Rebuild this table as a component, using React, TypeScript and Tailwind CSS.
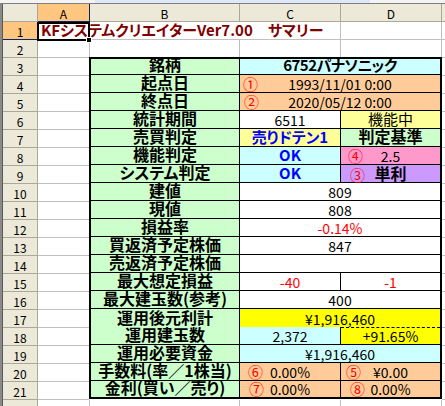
import React from "react";

const NUMS = Array.from({ length: 19 }, (_, i) => i + 3);

function ColHead({ label, active, className = "" }: { label: string; active?: boolean; className?: string }) {
  return (
    <div
      className={`h-[18px] flex items-end justify-center pb-[1px] text-[12px] leading-none border-r border-b ${
        active ? "bg-[#ffc680] border-[#0a246a]" : "bg-[#ece9d8] border-[#aca899]"
      } ${className}`}
    >
      {label}
    </div>
  );
}

function RowHead({ n, active }: { n: number; active?: boolean }) {
  return (
    <div
      className={`h-[18px] w-[35px] flex items-end justify-center pb-[1px] text-[12px] leading-none border-r border-b ${
        active ? "bg-[#ffc680] border-[#0a246a]" : "bg-[#ece9d8] border-[#aca899]"
      }`}
    >
      {n}
    </div>
  );
}

function Mark({ children, pad }: { children: string; pad: string }) {
  return <span className={`justify-self-start ${pad} text-[#ff0000] text-[15px] leading-none`}>{children}</span>;
}

// value centred across the cell, circled number pinned to the left
function MarkCell({ mark, pad, className, children }: { mark: string; pad: string; className: string; children: React.ReactNode }) {
  return (
    <div className={`grid grid-cols-[1fr_auto_1fr] items-end pb-[1px] ${className}`}>
      <Mark pad={pad}>{mark}</Mark>
      <span className="text-[14px] leading-none">{children}</span>
      <span />
    </div>
  );
}

function TRow({ label, first, last, open, children }: { label: string; first?: boolean; last?: boolean; open?: boolean; children?: React.ReactNode }) {
  const h = first || last ? "h-[16px]" : "h-[18px]";
  return (
    <div className={`flex ${h} ${last || open ? "" : "border-b border-black"}`}>
      <div className="w-[149px] shrink-0 border-r border-black bg-[#ccffcc] flex items-end justify-center pb-[2px]">
        <span className="text-[16px] font-bold leading-none [font-feature-settings:'palt']">{label}</span>
      </div>
      {children}
    </div>
  );
}

const C = "w-[101px] shrink-0 border-r border-black flex items-end justify-center pb-[1px]";
const D = "flex-1 flex items-end justify-center pb-[1px]";
const V = "text-[14px] leading-none";
const B = "text-[15px] font-bold leading-none mb-px [font-feature-settings:'palt']";

export default function App() {
  return (
    <div className="w-[445px] h-[406px] overflow-hidden bg-white flex flex-col font-['Noto_Sans_CJK_JP',sans-serif] text-black">
      <div className="h-[4px] shrink-0 flex border-b border-[#808080] bg-[#f4f4f4]">
        <div className="w-[95px]" />
        <div className="w-[275px] bg-[#dfe8f6]" />
      </div>
      <div className="flex flex-1 min-h-0">
        <div className="w-[3px] shrink-0 bg-[#8a8a8a] border-r border-[#5a5a5a]" />
        <div className="flex-1 flex flex-col">
          {/* column headers */}
          <div className="flex shrink-0">
            <ColHead label="" className="w-[35px]" />
            <ColHead label="A" active className="w-[52px]" />
            <ColHead label="B" className="w-[150px]" />
            <ColHead label="C" className="w-[101px]" />
            <ColHead label="D" className="w-[101px]" />
            <ColHead label="" className="flex-1 border-r-0" />
          </div>

          {/* row 1 */}
          <div className="flex shrink-0">
            <RowHead n={1} active />
            <div className="relative w-[303px] h-[18px] border-r border-b border-[#c0c0c0] flex items-end pl-[3px] pb-[2px]">
              <span className="text-[15px] font-bold leading-none text-[#800000] whitespace-nowrap [font-feature-settings:'palt']">
                KFシステムクリエイターVer7.00　サマリー
              </span>
              <div className="absolute -left-px top-0 w-[53px] h-[19px] border-2 border-black" />
              <div className="absolute left-[48px] top-[15px] w-[6px] h-[6px] bg-black border border-white" />
            </div>
            <div className="w-[101px] h-[18px] border-r border-b border-[#c0c0c0]" />
            <div className="flex-1 h-[18px] border-b border-[#c0c0c0]" />
          </div>

          {/* row 2 */}
          <div className="flex shrink-0">
            <RowHead n={2} />
            <div className="w-[52px] h-[18px] border-r border-b border-[#c0c0c0]" />
            <div className="w-[150px] h-[18px] border-r border-b border-[#c0c0c0]" />
            <div className="w-[101px] h-[18px] border-r border-b border-[#c0c0c0]" />
            <div className="w-[101px] h-[18px] border-r border-b border-[#c0c0c0]" />
            <div className="flex-1 h-[18px] border-b border-[#c0c0c0]" />
          </div>

          {/* rows 3-21 */}
          <div className="flex shrink-0">
            <div className="flex flex-col">
              {NUMS.map((n) => (
                <RowHead key={n} n={n} />
              ))}
            </div>
            <div className="w-[51px] flex flex-col">
              {NUMS.map((n) => (
                <div key={n} className="h-[18px] border-b border-[#c0c0c0]" />
              ))}
            </div>

            <div className="w-[353px] h-[342px] -mt-px border-2 border-black flex flex-col">
              <TRow label="銘柄" first>
                <div className={`${D} bg-[#ccffff]`}>
                  <span className={`${B} tracking-[-0.5px]`}>6752パナソニック</span>
                </div>
              </TRow>
              <TRow label="起点日">
                <MarkCell mark="①" pad="pl-[3px]" className="flex-1 bg-[#ffcc99]">1993/11/01 0:00</MarkCell>
              </TRow>
              <TRow label="終点日">
                <MarkCell mark="②" pad="pl-[4px]" className="flex-1 bg-[#ffcc99]">2020/05/12 0:00</MarkCell>
              </TRow>
              <TRow label="統計期間">
                <div className={`${C} bg-white`}>
                  <span className={V}>6511</span>
                </div>
                <div className={`${D} bg-[#ffff99]`}>
                  <span className="text-[15px] leading-none mb-px">機能中</span>
                </div>
              </TRow>
              <TRow label="売買判定">
                <div className={`${C} bg-[#ffff99]`}>
                  <span className={`${B} text-[#0000ff]`}>売りドテン1</span>
                </div>
                <div className={`${D} bg-[#ccffcc]`}>
                  <span className="text-[16px] font-bold leading-none mb-px">判定基準</span>
                </div>
              </TRow>
              <TRow label="機能判定">
                <div className={`${C} bg-[#ccffff]`}>
                  <span className={`${B} text-[#0000ff]`}>OK</span>
                </div>
                <MarkCell mark="④" pad="pl-[7px]" className="flex-1 bg-[#ff99cc]">2.5</MarkCell>
              </TRow>
              <TRow label="システム判定">
                <div className={`${C} bg-[#ccffff]`}>
                  <span className={`${B} text-[#0000ff]`}>OK</span>
                </div>
                <div className="flex-1 grid grid-cols-[1fr_auto_1fr] items-end pb-[1px] bg-[#cc99ff]">
                  <Mark pad="pl-[9px]">③</Mark>
                  <span className="text-[16px] font-bold leading-none mb-px">単利</span>
                  <span />
                </div>
              </TRow>
              <TRow label="建値">
                <div className={`${D} bg-white`}>
                  <span className={V}>809</span>
                </div>
              </TRow>
              <TRow label="現値">
                <div className={`${D} bg-white`}>
                  <span className={V}>808</span>
                </div>
              </TRow>
              <TRow label="損益率">
                <div className={`${D} bg-white`}>
                  <span className={`${V} text-[#ff0000]`}>-0.14%</span>
                </div>
              </TRow>
              <TRow label="買返済予定株価">
                <div className={`${D} bg-white`}>
                  <span className={V}>847</span>
                </div>
              </TRow>
              <TRow label="売返済予定株価">
                <div className={`${D} bg-white`} />
              </TRow>
              <TRow label="最大想定損益">
                <div className={`${C} bg-white`}>
                  <span className={`${V} text-[#ff0000]`}>-40</span>
                </div>
                <div className={`${D} bg-white`}>
                  <span className={`${V} text-[#ff0000]`}>-1</span>
                </div>
              </TRow>
              <TRow label="最大建玉数(参考)">
                <div className={`${D} bg-white`}>
                  <span className={V}>400</span>
                </div>
              </TRow>
              <TRow label="運用後元利計" open>
                <div className={`${D} bg-[#ffff00]`}>
                  <span className={V}>¥1,916,460</span>
                </div>
              </TRow>
              <TRow label="運用建玉数">
                <div className={`${C} bg-[#ccffff]`}>
                  <span className={V}>2,372</span>
                </div>
                <div className={`${D} bg-[#ffff00] border-t border-dashed border-black`}>
                  <span className={V}>+91.65%</span>
                </div>
              </TRow>
              <TRow label="運用必要資金">
                <div className={`${D} bg-[#ccffff]`}>
                  <span className={V}>¥1,916,460</span>
                </div>
              </TRow>
              <TRow label="手数料(率／1株当)">
                <MarkCell mark="⑥" pad="pl-[8px]" className="w-[101px] shrink-0 border-r border-black bg-[#ffcc99]">0.00%</MarkCell>
                <MarkCell mark="⑤" pad="pl-[5px]" className="flex-1 bg-[#ffcc99]">¥0.00</MarkCell>
              </TRow>
              <TRow label="金利(買い／売り)" last>
                <MarkCell mark="⑦" pad="pl-[9px]" className="w-[101px] shrink-0 border-r border-black bg-[#ffcc99]">0.00%</MarkCell>
                <MarkCell mark="⑧" pad="pl-[9px]" className="flex-1 bg-[#ffcc99]">0.00%</MarkCell>
              </TRow>
            </div>

            <div className="flex-1 flex flex-col">
              {NUMS.map((n) => (
                <div key={n} className="h-[18px] border-b border-[#c0c0c0]" />
              ))}
            </div>
          </div>

          {/* row 22, cut off */}
          <div className="flex flex-1 min-h-0">
            <div className="w-[35px] bg-[#ece9d8] border-r border-[#aca899]" />
            <div className="w-[52px] border-r border-[#c0c0c0]" />
            <div className="w-[150px] border-r border-[#c0c0c0]" />
            <div className="w-[101px] border-r border-[#c0c0c0]" />
            <div className="w-[101px] border-r border-[#c0c0c0]" />
            <div className="flex-1" />
          </div>
        </div>
      </div>
    </div>
  );
}
